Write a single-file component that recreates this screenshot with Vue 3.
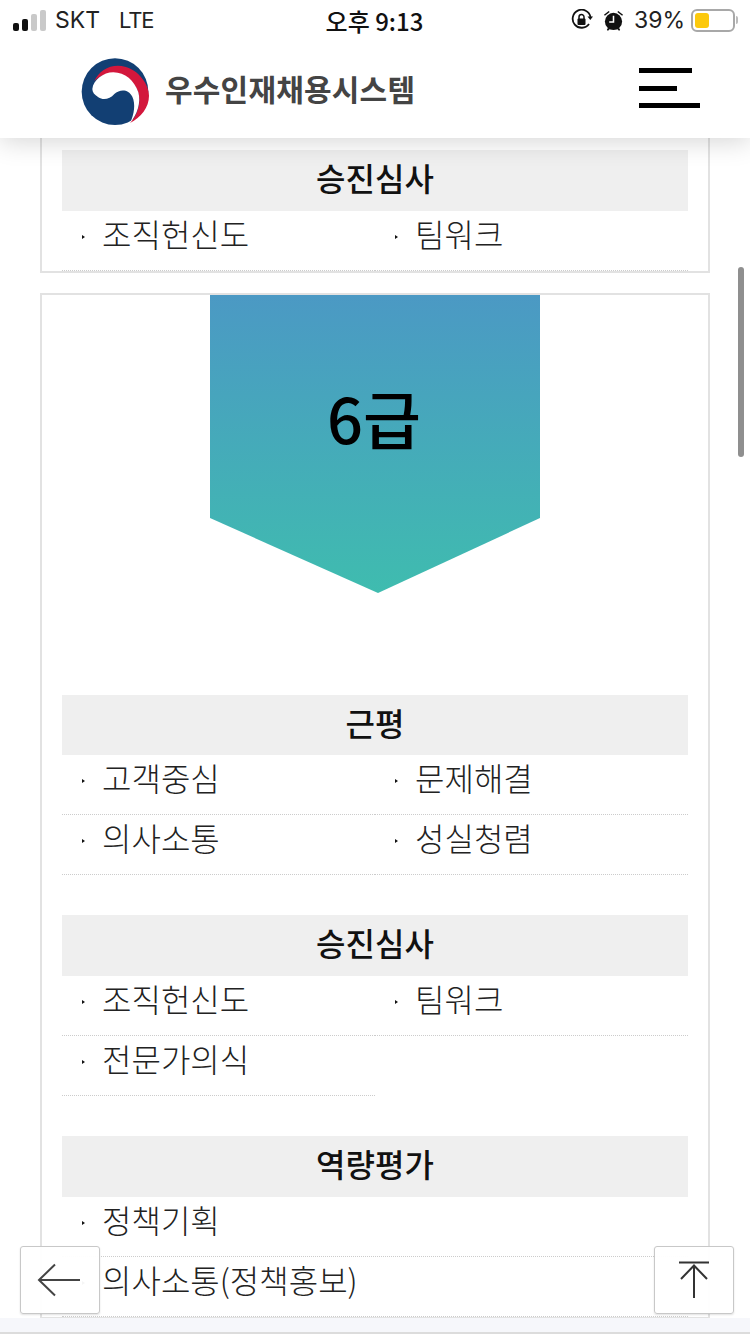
<template>
  <div class="page">
    <div class="top">
      <div class="status">
        <div class="status-left">
          <svg class="signal" width="33" height="21" viewBox="0 0 33 21">
            <rect x="0" y="13" width="6" height="8" rx="2" fill="#111" />
            <rect x="9" y="9" width="6" height="12" rx="2" fill="#111" />
            <rect x="18" y="4" width="6" height="17" rx="2" fill="#c9c9c9" />
            <rect x="27" y="0" width="6" height="21" rx="2" fill="#c9c9c9" />
          </svg>
          <span>SKT</span>
          <span class="lte">LTE</span>
        </div>
        <div class="clock">오후 9:13</div>
        <div class="status-right">
          <svg width="22" height="22" viewBox="0 0 22 22" fill="none">
            <path d="M18 15a9 9 0 1 1 1.500-7" stroke="#111" stroke-width="1.800" />
            <path d="M16.500 7.500h5.500l-2.700 3.500z" fill="#111" />
            <rect x="6.500" y="9.500" width="8" height="6.500" rx="1" fill="#111" />
            <path d="M8 10V8a2.500 2.500 0 0 1 5 0v2" stroke="#111" stroke-width="1.500" />
          </svg>
          <svg class="alarm" width="21" height="23" viewBox="0 0 22 24">
            <circle cx="11" cy="13" r="9" fill="#111" />
            <path d="M1 6l5-4 1 1-5 4zM21 6l-5-4-1 1 5 4zM4 21l3-2 1 1-3 3zM18 21l-3-2-1 1 3 3z" fill="#111" />
            <path d="M11 7v6.500H6.500" stroke="#fff" stroke-width="1.600" fill="none" />
          </svg>
          <span class="pct">39%</span>
          <div class="battery"><div class="battery-fill" :style="{ width: batteryWidth }"></div></div>
          <div class="battery-tip"></div>
        </div>
      </div>
      <div class="brand">
        <svg class="logo" width="80" height="76" viewBox="0 0 240 228">
          <circle cx="120" cy="113" r="100" fill="#123f73" />
          <path d="M58 82C72 48 110 28 150 38C190 48 222 90 222 125C222 160 198 190 165 207C190 180 200 140 188 110C172 72 130 50 95 60C80 64 66 72 58 82Z" fill="#d3173c" />
          <path d="M52 105C55 78 85 55 115 55C150 55 178 80 190 115C198 145 188 180 165 207C178 180 182 150 172 128C160 105 135 105 118 120C105 135 85 140 70 130C58 122 52 115 52 105Z" fill="#fff" />
        </svg>
        <div class="brand-name">우수인재채용시스템</div>
        <div class="menu">
          <i class="bar-a"></i>
          <i class="bar-b"></i>
          <i class="bar-c"></i>
        </div>
      </div>
    </div>

    <div class="content">
      <section class="card first">
        <div v-for="group in firstCard" :key="group.title" class="group">
          <h3>{{ group.title }}</h3>
          <ul>
            <li v-for="item in group.items" :key="item">{{ item }}</li>
          </ul>
        </div>
      </section>

      <section class="card">
        <div class="grade">6급</div>
        <div v-for="group in gradeCard" :key="group.title" class="group">
          <h3>{{ group.title }}</h3>
          <ul :class="{ single: group.single }">
            <li v-for="item in group.items" :key="item">{{ item }}</li>
          </ul>
        </div>
      </section>
    </div>

    <div class="strip"></div>
    <div class="scrollbar"></div>

    <button class="float back" aria-label="뒤로">
      <svg width="44" height="36" viewBox="0 0 44 36" fill="none">
        <path d="M43 18H2M18 2.500L2 18l16 15.500" stroke="#444" stroke-width="2" />
      </svg>
    </button>
    <button class="float up" aria-label="맨 위로">
      <svg width="32" height="38" viewBox="0 0 32 38" fill="none">
        <path d="M1 1.500h30M16 37V4M3 18L16 4.500 29 18" stroke="#333" stroke-width="2" />
      </svg>
    </button>
  </div>
</template>

<script setup>
const batteryWidth = '39%'

const firstCard = [
  { title: '승진심사', items: ['조직헌신도', '팀워크'] }
]

const gradeCard = [
  { title: '근평', items: ['고객중심', '문제해결', '의사소통', '성실청렴'] },
  { title: '승진심사', items: ['조직헌신도', '팀워크', '전문가의식'] },
  { title: '역량평가', items: ['정책기획', '의사소통(정책홍보)'], single: true }
]
</script>

<style>
html, body {
  margin: 0;
  background: #fff;
}
</style>

<style scoped>
.page {
  position: relative;
  width: 750px;
  height: 1334px;
  overflow: hidden;
  background: #fff;
  color: #111;
  font-family: "Noto Sans CJK KR", "Noto Sans", sans-serif;
}
.top {
  position: relative;
  z-index: 2;
  height: 138px;
  background: #fff;
  box-shadow: 0 4px 24px rgba(0, 0, 0, 0.16);
}
.status {
  display: flex;
  align-items: center;
  justify-content: space-between;
  height: 40px;
  padding: 0 12px 0 13px;
  font-family: Inter, "Noto Sans CJK KR", sans-serif;
  font-size: 23px;
}
.status-left {
  display: flex;
  align-items: center;
  width: 228px;
  color: #222;
}
.signal {
  margin-right: 9px;
}
.lte {
  margin-left: 19px;
  font-size: 22px;
  letter-spacing: -1.200px;
}
.clock {
  font-family: "Noto Sans CJK KR", sans-serif;
  font-weight: 500;
  font-size: 24px;
}
.status-right {
  display: flex;
  align-items: center;
  width: 230px;
  justify-content: flex-end;
  color: #222;
}
.alarm {
  margin-left: 10px;
}
.pct {
  margin-left: 10px;
}
.battery {
  width: 44px;
  height: 23px;
  margin-left: 6px;
  padding: 2px;
  border: 2px solid #a8a8a8;
  border-radius: 6px;
  box-sizing: border-box;
}
.battery-fill {
  height: 100%;
  background: #fcc90d;
  border-radius: 3px;
}
.battery-tip {
  width: 2px;
  height: 8px;
  margin-left: 1px;
  background: #bbb;
  border-radius: 0 2px 2px 0;
}
.brand {
  display: flex;
  align-items: center;
  height: 100px;
  margin-top: -2px;
  padding: 0 50px 0 75px;
}
.logo {
  margin-top: 7px;
}
.brand-name {
  flex: 1;
  margin-left: 10px;
  font-size: 30px;
  font-weight: 700;
  color: #444;
  letter-spacing: 0.2px;
  white-space: nowrap;
}
.menu {
  display: flex;
  flex-direction: column;
  gap: 12.500px;
  width: 61px;
}
.menu i {
  display: block;
  height: 5px;
  background: #000;
}
.bar-a {
  width: 53px;
}
.bar-b {
  width: 38px;
}
.bar-c {
  width: 61px;
}
.content {
  display: flex;
  flex-direction: column;
  gap: 20px;
  margin: 0 40px;
}
.card {
  padding: 0 20px;
  border: 2px solid #e2e2e2;
}
.card.first {
  border-top: 0;
  padding-top: 12px;
}
.group + .group {
  margin-top: 40px;
}
h3 {
  height: 60.400px;
  margin: 0;
  background: #efefef;
  font-size: 32px;
  font-weight: 500;
  line-height: 55px;
  text-align: center;
  color: #111;
}
.group:last-child h3 {
  height: 61px;
}
ul {
  display: grid;
  grid-template-columns: 313px 313px;
  margin: 0;
  padding: 0;
  list-style: none;
}
ul.single {
  grid-template-columns: 626px;
}
li {
  position: relative;
  height: 60px;
  box-sizing: border-box;
  padding-left: 40px;
  border-bottom: 1px dotted #ccc;
  font-size: 32px;
  font-weight: 300;
  line-height: 44px;
  color: #222;
  white-space: nowrap;
}
li::before {
  content: "";
  position: absolute;
  left: 20px;
  top: 24px;
  border-left: 3px solid #111;
  border-top: 2px solid transparent;
  border-bottom: 2px solid transparent;
}
.grade {
  width: 330px;
  height: 298px;
  margin: 0 0 102px 148px;
  background: linear-gradient(180deg, #4b99c4 0%, #3fbcaf 100%);
  clip-path: polygon(0 0, 100% 0, 100% 223px, 168px 100%, 0 223px);
  box-sizing: border-box;
  padding: 83px 2px 0 0;
  font-size: 63px;
  font-weight: 500;
  line-height: 78px;
  text-align: center;
  color: #000;
}
.strip {
  position: absolute;
  left: 0;
  right: 0;
  bottom: 0;
  height: 16px;
  background: #f6f7fb;
  border-bottom: 2px solid #dcdcdc;
  box-sizing: border-box;
}
.scrollbar {
  position: absolute;
  left: 738px;
  top: 267px;
  width: 6px;
  height: 190px;
  border-radius: 3px;
  background: #8f8f8f;
}
.float {
  position: absolute;
  top: 1246px;
  display: flex;
  align-items: center;
  justify-content: center;
  height: 68px;
  padding: 0;
  background: rgba(255, 255, 255, 0.96);
  border: 1px solid #c8c8c8;
  border-radius: 3px;
  box-shadow: 0 1px 2px rgba(0, 0, 0, 0.12);
}
.back {
  left: 20px;
  width: 80px;
  padding-right: 2px;
}
.up {
  left: 654px;
  width: 80px;
}
</style>
